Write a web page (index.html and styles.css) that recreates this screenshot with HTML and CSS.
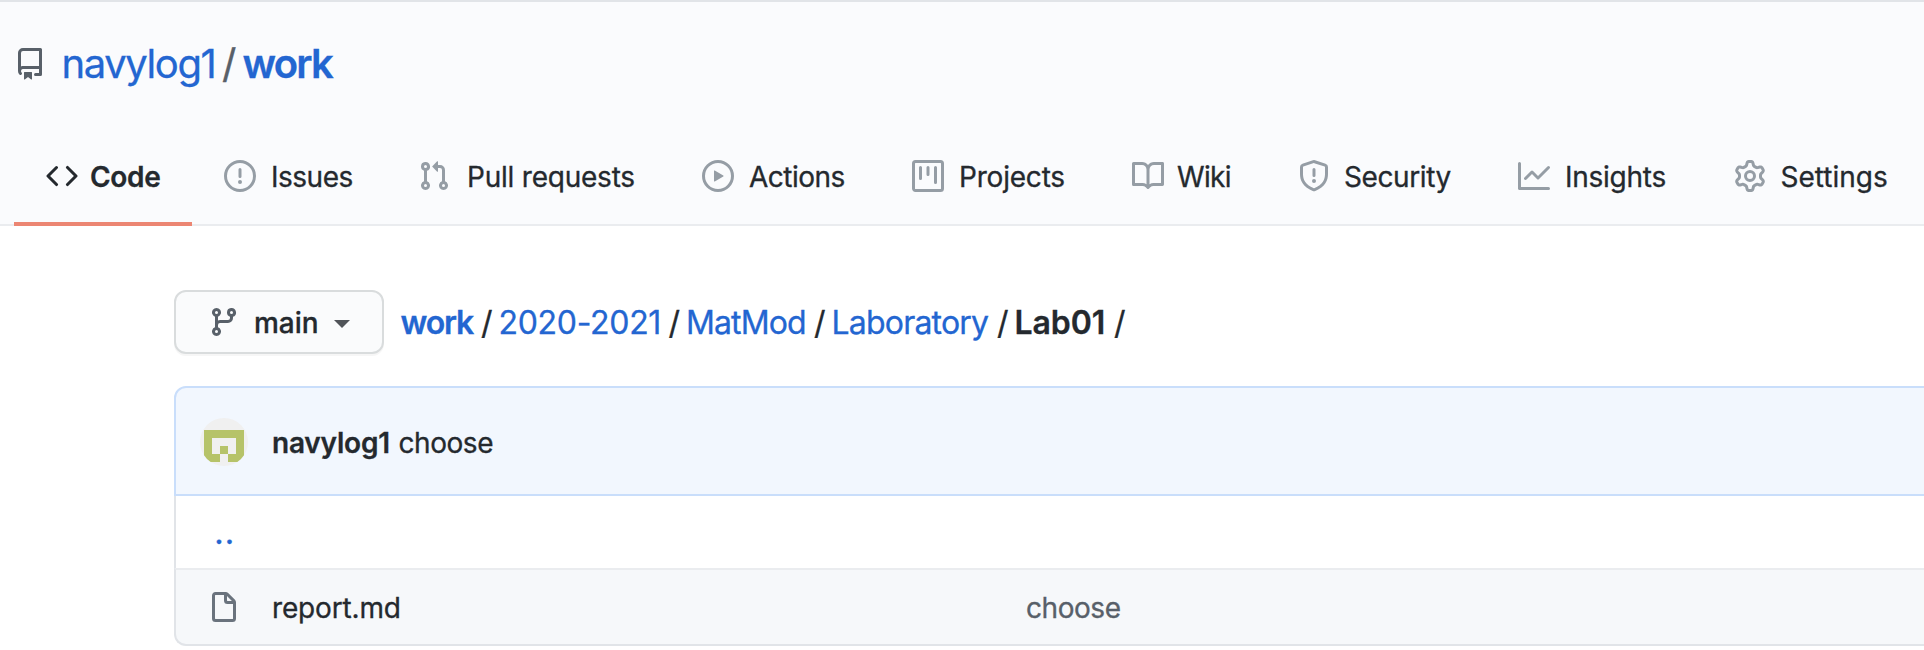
FILE: index.html
```
<!DOCTYPE html>
<html lang="en">
<head>
<meta charset="utf-8">
<title>navylog1/work</title>
<link rel="stylesheet" href="styles.css">
</head>
<body>
<header class="repo-header">
  <h1 class="repo-title">
    <svg class="icon repo-icon" viewBox="0 0 16 16"><path fill-rule="evenodd" d="M2 2.5A2.5 2.5 0 014.5 0h8.75a.75.75 0 01.75.75v12.5a.75.75 0 01-.75.75h-2.5a.75.75 0 110-1.5h1.75v-2h-8a1 1 0 00-.714 1.7.75.75 0 01-1.072 1.05A2.495 2.495 0 012 11.5v-9zm10.5-1V9h-8c-.356 0-.694.074-1 .208V2.5a1 1 0 011-1h8zM5 12.25v3.25a.25.25 0 00.4.2l1.45-1.087a.25.25 0 01.3 0L8.6 15.7a.25.25 0 00.4-.2v-3.25a.25.25 0 00-.25-.25h-3.5a.25.25 0 00-.25.25z"/></svg>
    <a class="owner">navylog1</a><span class="title-slash">/</span><a class="repo-name">work</a>
  </h1>
  <nav class="tabs">
    <a class="tab tab-code selected"><svg class="icon" viewBox="0 0 16 16"><path fill-rule="evenodd" d="M4.72 3.22a.75.75 0 011.06 1.06L2.06 8l3.72 3.72a.75.75 0 11-1.06 1.06L.47 8.53a.75.75 0 010-1.06l4.25-4.25zm6.56 0a.75.75 0 10-1.06 1.06L13.94 8l-3.72 3.72a.75.75 0 101.06 1.06l4.25-4.25a.75.75 0 000-1.06l-4.25-4.25z"/></svg><span>Code</span></a>
    <a class="tab tab-issues"><svg class="icon" viewBox="0 0 16 16"><path fill-rule="evenodd" d="M8 1.5a6.5 6.5 0 100 13 6.5 6.5 0 000-13zM0 8a8 8 0 1116 0A8 8 0 010 8zm9 3a1 1 0 11-2 0 1 1 0 012 0zm-.25-6.25a.75.75 0 00-1.5 0v3.5a.75.75 0 001.5 0v-3.5z"/></svg><span>Issues</span></a>
    <a class="tab tab-pulls"><svg class="icon" viewBox="0 0 16 16"><path fill-rule="evenodd" d="M7.177 3.073L9.573.677A.25.25 0 0110 .854v4.792a.25.25 0 01-.427.177L7.177 3.427a.25.25 0 010-.354zM3.75 2.5a.75.75 0 100 1.5.75.75 0 000-1.5zm-2.25.75a2.25 2.25 0 113 2.122v5.256a2.251 2.251 0 11-1.5 0V5.372A2.25 2.25 0 011.5 3.25zM11 2.5h-1V4h1a1 1 0 011 1v5.628a2.251 2.251 0 101.5 0V5A2.5 2.5 0 0011 2.5zm1 10.25a.75.75 0 111.5 0 .75.75 0 01-1.5 0zM3.75 12a.75.75 0 100 1.5.75.75 0 000-1.5z"/></svg><span>Pull requests</span></a>
    <a class="tab tab-actions"><svg class="icon" viewBox="0 0 16 16"><path fill-rule="evenodd" d="M1.5 8a6.5 6.5 0 1113 0 6.5 6.5 0 01-13 0zM8 0a8 8 0 100 16A8 8 0 008 0zM6.379 5.227A.25.25 0 006 5.442v5.117a.25.25 0 00.379.214l4.264-2.559a.25.25 0 000-.428L6.379 5.227z"/></svg><span>Actions</span></a>
    <a class="tab tab-projects"><svg class="icon" viewBox="0 0 16 16"><path fill-rule="evenodd" d="M1.75 0A1.75 1.75 0 000 1.75v12.5C0 15.216.784 16 1.75 16h12.5A1.75 1.75 0 0016 14.25V1.75A1.75 1.75 0 0014.25 0H1.75zM1.5 1.75a.25.25 0 01.25-.25h12.5a.25.25 0 01.25.25v12.5a.25.25 0 01-.25.25H1.75a.25.25 0 01-.25-.25V1.75zM11.75 3a.75.75 0 00-.75.75v7.5a.75.75 0 001.5 0v-7.5a.75.75 0 00-.75-.75zm-8.25.75a.75.75 0 011.5 0v5.5a.75.75 0 01-1.5 0v-5.5zM8 3a.75.75 0 00-.75.75v3.5a.75.75 0 001.5 0v-3.5A.75.75 0 008 3z"/></svg><span>Projects</span></a>
    <a class="tab tab-wiki"><svg class="icon" viewBox="0 0 16 16"><path fill-rule="evenodd" d="M0 1.75A.75.75 0 01.75 1h4.253c1.227 0 2.317.59 3 1.501A3.744 3.744 0 0111.006 1h4.245a.75.75 0 01.75.75v10.5a.75.75 0 01-.75.75h-4.507a2.25 2.25 0 00-1.591.659l-.622.621a.75.75 0 01-1.06 0l-.622-.621A2.25 2.25 0 005.258 13H.75a.75.75 0 01-.75-.75V1.75zm8.755 3a2.25 2.25 0 012.25-2.25H14.5v9h-3.757c-.71 0-1.4.201-1.992.572l.004-7.322zm-1.504 7.324l.004-5.073-.002-2.253A2.25 2.25 0 005.003 2.5H1.5v9h3.757a3.75 3.75 0 011.994.574z"/></svg><span>Wiki</span></a>
    <a class="tab tab-security"><svg class="icon" viewBox="0 0 16 16"><path fill-rule="evenodd" d="M7.467.133a1.75 1.75 0 011.066 0l5.25 1.68A1.75 1.75 0 0115 3.48V7c0 1.566-.32 3.182-1.303 4.682-.983 1.498-2.585 2.813-5.032 3.855a1.7 1.7 0 01-1.33 0c-2.447-1.042-4.049-2.357-5.032-3.855C1.32 10.182 1 8.566 1 7V3.48a1.75 1.75 0 011.217-1.667l5.25-1.68zm.61 1.429a.25.25 0 00-.153 0l-5.25 1.68a.25.25 0 00-.174.238V7c0 1.358.275 2.666 1.057 3.86.784 1.194 2.121 2.34 4.366 3.297a.2.2 0 00.154 0c2.245-.956 3.582-2.104 4.366-3.298C13.225 9.666 13.5 8.36 13.5 7V3.48a.25.25 0 00-.174-.237l-5.25-1.68zM9 10.5a1 1 0 11-2 0 1 1 0 012 0zm-.25-5.75a.75.75 0 10-1.5 0v3a.75.75 0 001.5 0v-3z"/></svg><span>Security</span></a>
    <a class="tab tab-insights"><svg class="icon" viewBox="0 0 16 16"><path fill-rule="evenodd" d="M1.5 1.75a.75.75 0 00-1.5 0v12.5c0 .414.336.75.75.75h14.5a.75.75 0 000-1.5H1.5V1.75zm14.28 2.53a.75.75 0 00-1.06-1.06L10 7.94 7.53 5.47a.75.75 0 00-1.06 0L3.22 8.72a.75.75 0 001.06 1.06L7 7.06l2.47 2.47a.75.75 0 001.06 0l5.25-5.25z"/></svg><span>Insights</span></a>
    <a class="tab tab-settings"><svg class="icon" viewBox="0 0 16 16"><path fill-rule="evenodd" d="M7.429 1.525a6.593 6.593 0 011.142 0c.036.003.108.036.137.146l.289 1.105c.147.56.55.967.997 1.189.174.086.341.183.501.29.417.278.97.423 1.53.27l1.102-.303c.11-.03.175.016.195.046.219.31.41.641.573.989.014.031.022.11-.059.19l-.815.806c-.411.406-.562.957-.53 1.456a4.588 4.588 0 010 .582c-.032.499.119 1.05.53 1.456l.815.806c.08.08.073.159.059.19a6.494 6.494 0 01-.573.99c-.02.029-.086.074-.195.045l-1.103-.303c-.559-.153-1.112-.008-1.529.27-.16.107-.327.204-.5.29-.449.222-.851.628-.998 1.189l-.289 1.105c-.029.11-.101.143-.137.146a6.613 6.613 0 01-1.142 0c-.036-.003-.108-.037-.137-.146l-.289-1.105c-.147-.56-.55-.967-.997-1.189a4.502 4.502 0 01-.501-.29c-.417-.278-.97-.423-1.53-.27l-1.102.303c-.11.03-.175-.016-.195-.046a6.492 6.492 0 01-.573-.989c-.014-.031-.022-.11.059-.19l.815-.806c.411-.406.562-.957.53-1.456a4.587 4.587 0 010-.582c.032-.499-.119-1.05-.53-1.456l-.815-.806c-.08-.08-.073-.159-.059-.19a6.44 6.44 0 01.573-.99c.02-.029.086-.075.195-.045l1.103.303c.559.153 1.112.008 1.529-.27.16-.107.327-.204.5-.29.449-.222.851-.628.998-1.189l.289-1.105c.029-.11.101-.143.137-.146zM8 0c-.236 0-.47.01-.701.03-.743.065-1.29.615-1.458 1.261l-.29 1.106c-.017.066-.078.158-.211.224a5.994 5.994 0 00-.668.386c-.123.082-.233.09-.3.071L3.27 2.776c-.644-.177-1.392.02-1.82.63a7.977 7.977 0 00-.704 1.217c-.315.675-.111 1.422.363 1.891l.815.806c.05.048.098.147.088.294a6.084 6.084 0 000 .772c.01.147-.038.246-.088.294l-.815.806c-.474.469-.678 1.216-.363 1.891.2.428.436.835.704 1.218.428.609 1.176.806 1.82.63l1.103-.303c.066-.019.176-.011.299.071.213.143.436.272.668.386.133.066.194.158.212.224l.289 1.106c.169.646.715 1.196 1.458 1.26a8.094 8.094 0 001.402 0c.743-.064 1.29-.614 1.458-1.26l.29-1.106c.017-.066.078-.158.211-.224a5.98 5.98 0 00.668-.386c.123-.082.233-.09.3-.071l1.102.302c.644.177 1.392-.02 1.82-.63.268-.382.505-.789.704-1.217.315-.675.111-1.422-.364-1.891l-.814-.806c-.05-.048-.098-.147-.088-.294a6.1 6.1 0 000-.772c-.01-.147.039-.246.088-.294l.814-.806c.475-.469.679-1.216.364-1.891a7.992 7.992 0 00-.704-1.218c-.428-.609-1.176-.806-1.82-.63l-1.103.303c-.066.019-.176.011-.299-.071a5.991 5.991 0 00-.668-.386c-.133-.066-.194-.158-.212-.224L10.16 1.29C9.99.645 9.444.095 8.701.031A8.094 8.094 0 008 0zm1.5 8a1.5 1.5 0 11-3 0 1.5 1.5 0 013 0zM11 8a3 3 0 11-6 0 3 3 0 016 0z"/></svg><span>Settings</span></a>
  </nav>
</header>
<main class="content">
  <div class="file-nav">
    <button class="branch-button"><svg class="icon" viewBox="0 0 16 16"><path fill-rule="evenodd" d="M11.75 2.5a.75.75 0 100 1.5.75.75 0 000-1.5zm-2.25.75a2.25 2.25 0 113 2.122V6A2.5 2.5 0 0110 8.5H6a1 1 0 00-1 1v1.128a2.251 2.251 0 11-1.5 0V5.372a2.25 2.25 0 111.5 0v1.836A2.492 2.492 0 016 7h4a1 1 0 001-1v-.628A2.25 2.25 0 019.5 3.25zM4.25 12a.75.75 0 100 1.5.75.75 0 000-1.5zM3.5 3.25a.75.75 0 111.5 0 .75.75 0 01-1.5 0z"/></svg><span class="branch-name">main</span><span class="caret"></span></button>
    <div class="breadcrumb">
      <a class="crumb crumb-root">work</a><span class="sep">/</span>
      <a class="crumb crumb-year">2020-2021</a><span class="sep">/</span>
      <a class="crumb crumb-course">MatMod</a><span class="sep">/</span>
      <a class="crumb crumb-section">Laboratory</a><span class="sep">/</span>
      <strong class="crumb crumb-current">Lab01</strong><span class="sep">/</span>
    </div>
  </div>
  <section class="files">
    <div class="commit">
      <svg class="avatar" viewBox="0 0 48 48"><defs><clipPath id="round"><circle cx="24" cy="24" r="24"/></clipPath></defs><g clip-path="url(#round)"><path fill="#f0f0f0" d="M0 0h48v48H0z"/><path fill="#b6c369" d="M4 12h40v32H28v-8h8V20H12v16h8v8H4zM20 28h8v8h-8z"/></g></svg>
      <strong class="author">navylog1</strong><span class="message">choose</span>
    </div>
    <div class="row row-up"><a class="up">..</a></div>
    <div class="row row-file">
      <svg class="icon file-icon" viewBox="0 0 16 16"><path fill-rule="evenodd" d="M3.75 1.5a.25.25 0 00-.25.25v11.5c0 .138.112.25.25.25h8.5a.25.25 0 00.25-.25V6H9.75A1.75 1.75 0 018 4.25V1.5H3.75zm5.75.56v2.19c0 .138.112.25.25.25h2.19L9.5 2.06zM2 1.75C2 .784 2.784 0 3.75 0h5.086c.464 0 .909.184 1.237.513l3.414 3.414c.329.328.513.773.513 1.237v8.086A1.75 1.75 0 0112.25 15h-8.5A1.75 1.75 0 012 13.25V1.75z"/></svg>
      <a class="file-name">report.md</a><a class="message file-message">choose</a>
    </div>
  </section>
</main>
</body>
</html>
```
FILE: styles.css
```
* { box-sizing: border-box; }
body {
  margin: 0;
  overflow: hidden;
  background: #fff;
  color: #24292e;
  font: 28px/42px Inter, "Liberation Sans", sans-serif;
  -webkit-text-stroke: .3px currentColor;
}
.icon { width: 32px; height: 32px; flex: none; fill: currentColor; }

.repo-header {
  height: 226px;
  background: #fafbfd;
  border-top: 2px solid #e1e4e8;
  border-bottom: 2px solid #eaecef;
}
.repo-title {
  display: flex;
  align-items: center;
  height: 60px;
  margin: 32px 0 36px;
  padding-left: 14px;
  color: #586069;
  font-size: 40px;
  line-height: 60px;
  font-weight: 400;
}
.repo-icon { margin: 0 15.5px 0 0; }
.owner { width: 160.5px; color: #2366d1; letter-spacing: -1.4px; }
.title-slash { width: 20.5px; }
.repo-name { color: #2366d1; font-weight: 600; letter-spacing: -1.8px; }

.tabs { display: flex; height: 96px; padding-left: 14px; }
.tab {
  display: flex;
  flex: none;
  align-items: center;
  gap: 15px;
  height: 96px;
  padding: 0 0 4px 32px;
  white-space: nowrap;
}
.tab span { padding-top: 1px; }
.tab .icon { color: #959da5; }
.tab.selected { border-bottom: 4px solid #ec8673; padding-bottom: 0; font-weight: 600; }
.tab.selected .icon { color: #24292e; }
.tab-code { width: 178px; gap: 12px; letter-spacing: -.3px; }
.tab-issues { width: 194px; letter-spacing: -.5px; }
.tab-pulls { width: 284px; gap: 17px; letter-spacing: -.22px; }
.tab-actions { width: 210px; gap: 15px; letter-spacing: -.5px; }
.tab-projects { width: 220px; letter-spacing: -.2px; }
.tab-wiki { width: 166px; gap: 13px; letter-spacing: -.7px; }
.tab-security { width: 220px; gap: 14px; letter-spacing: -.4px; }
.tab-insights { width: 215.5px; letter-spacing: -.25px; }

.content { padding: 64px 0 0 174px; }
.file-nav { display: flex; align-items: center; height: 64px; margin-bottom: 32px; }
.branch-button {
  display: flex;
  align-items: center;
  width: 210px;
  height: 64px;
  margin-right: 16.5px;
  padding: 0 0 0 32px;
  background: #fafbfc;
  border: 2px solid #d9dcdd;
  border-radius: 12px;
  box-shadow: 0 2px 0 rgba(27, 31, 35, .04);
  color: #24292e;
  font: 500 28px/40px Inter, "Liberation Sans", sans-serif;
  text-align: left;
}
.branch-button .icon { color: #586069; }
.branch-name { width: 80px; margin-left: 14px; padding-top: 1px; }
.caret {
  border: 8px solid transparent;
  border-top-color: #505459;
  border-bottom: 0;
  margin-top: 4px;
}
.breadcrumb {
  display: flex;
  padding-top: 2px;
  font-size: 32px;
  line-height: 48px;
  white-space: nowrap;
}
.crumb { color: #2366d1; }
.sep { width: 17.5px; }
.crumb-root { width: 80.5px; font-weight: 600; letter-spacing: -1.2px; }
.crumb-year { width: 170px; letter-spacing: -.3px; }
.crumb-course { width: 128px; letter-spacing: -.9px; }
.crumb-section { width: 165.5px; letter-spacing: -.8px; }
.crumb-current { width: 99.5px; color: #24292e; font-weight: 600; letter-spacing: -.1px; }

.files { width: 1800px; }
.commit {
  display: flex;
  align-items: center;
  height: 110px;
  padding-left: 24px;
  background: #f2f7fe;
  border: 2px solid #c9defb;
  border-radius: 12px 12px 0 0;
}
.avatar { width: 48px; height: 48px; margin: 2px 24px 0 0; }
.author, .commit .message { padding-top: 3px; }
.author { width: 126.5px; font-weight: 600; letter-spacing: -.2px; }
.message { letter-spacing: -.45px; }
.row { display: flex; align-items: center; border-left: 2px solid #e1e4e8; }
.row-up { height: 72px; padding: 3px 0 0 38.5px; }
.up { color: #2366d1; font-weight: 600; letter-spacing: 1.5px; }
.row-file {
  height: 78px;
  padding: 2px 0 0 32px;
  background: #f6f8fa;
  border-top: 2px solid #eaecef;
  border-bottom: 2px solid #e1e4e8;
  border-radius: 0 0 0 12px;
}
.file-icon { color: #6a737d; }
.file-name { width: 754px; margin-left: 32px; letter-spacing: -.15px; }
.file-message { color: #586069; }
```
